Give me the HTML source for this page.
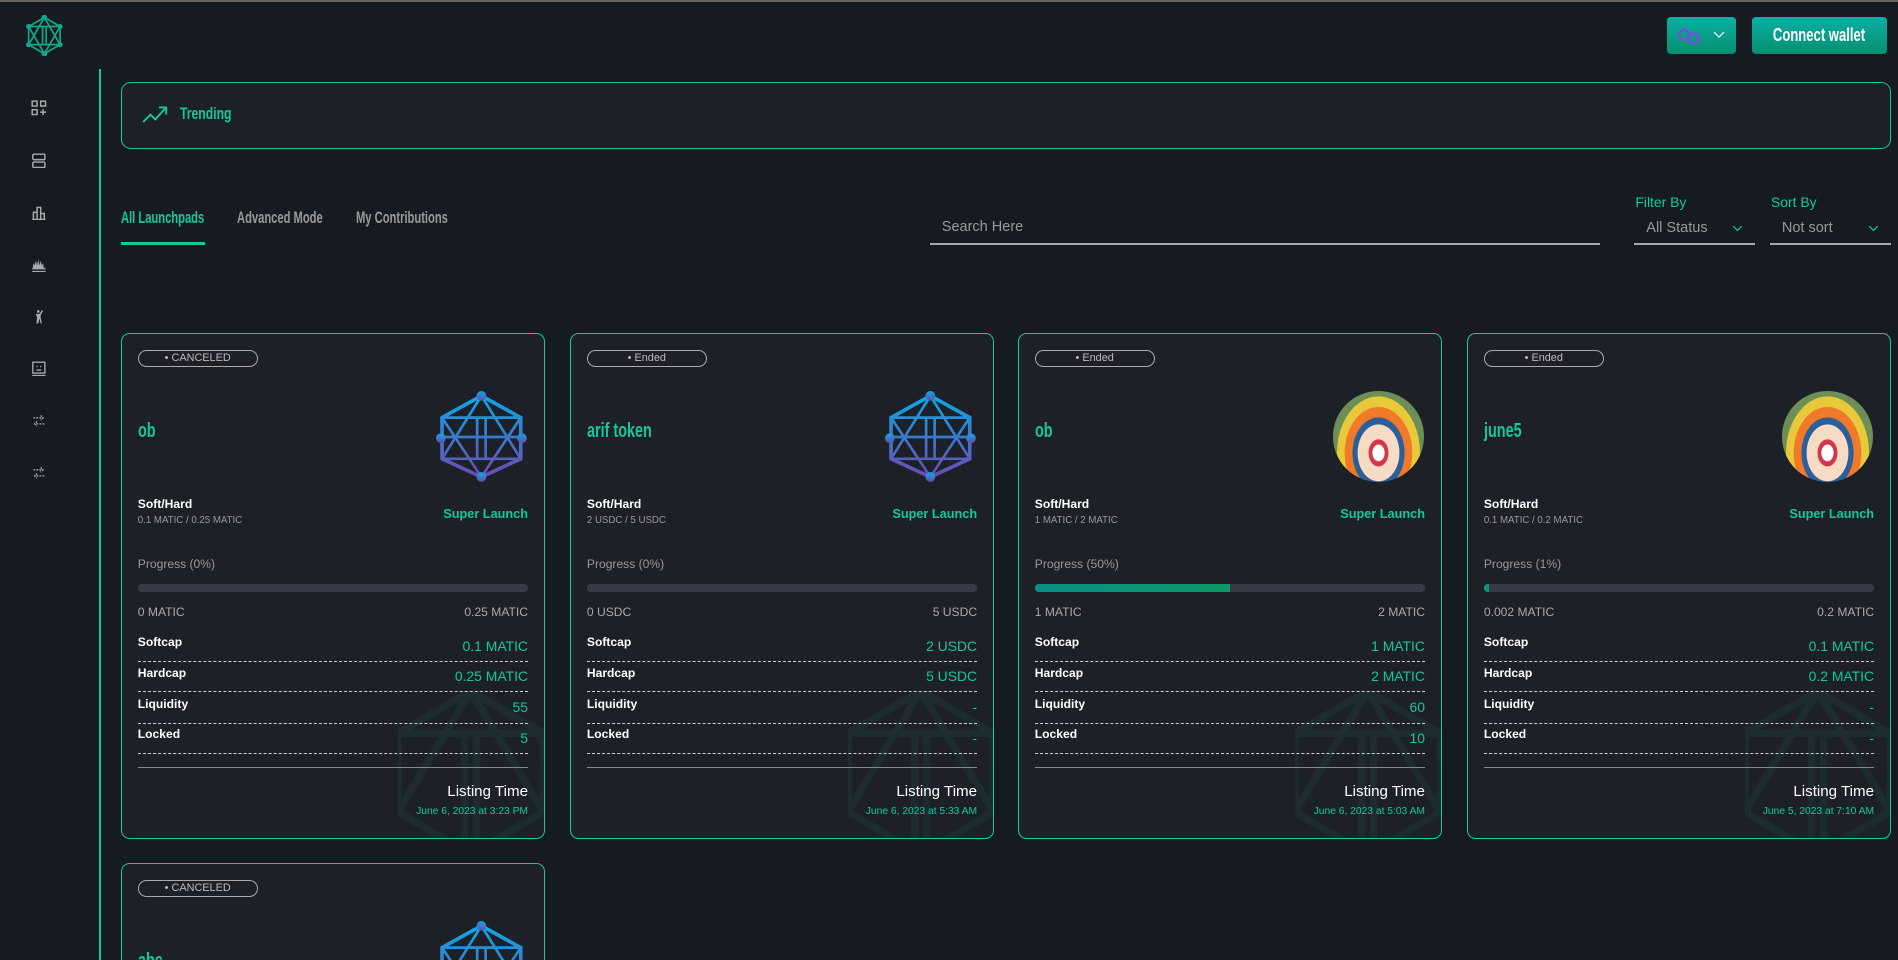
<!DOCTYPE html>
<html><head><meta charset="utf-8"><style>
*{box-sizing:border-box;margin:0;padding:0}
html,body{width:1898px;height:960px;overflow:hidden;background:#161b22}
#w{position:relative;width:1568px;height:793px;overflow:hidden;zoom:1.2105;font-family:"Liberation Sans",sans-serif;color:#fff;background:#161b22}
.a{position:absolute}
.g{color:#13c89c}
.card{position:absolute;width:350px;height:418px;background:#1e2028;border:1px solid #18c99b;border-radius:7px;overflow:hidden}
.badge{position:absolute;left:13px;top:13px;width:99px;height:14px;border:1px solid #aaa;border-radius:8px;font-size:9px;color:#bbb;text-align:center;line-height:12px}
.title{position:absolute;left:13px;top:70px;font-size:17px;font-weight:bold;color:#13c89c;transform:scaleX(.7);transform-origin:left;white-space:nowrap}
.logo{position:absolute;right:14px;top:47px;width:75px;height:75px}
.sh{position:absolute;left:13px;top:135px;font-size:10px;font-weight:bold}
.shv{position:absolute;left:13px;top:150px;font-size:8px;color:#999}
.sl{position:absolute;right:13px;top:142px;font-size:10.5px;font-weight:bold;color:#13c89c}
.pr{position:absolute;left:13px;top:184px;font-size:10px;color:#999}
.bar{position:absolute;left:13px;right:13px;top:207px;height:6px;border-radius:3px;background:#363b46;overflow:hidden}
.bar i{display:block;height:100%;background:linear-gradient(90deg,#0a8f86,#0e9966)}
.mm{position:absolute;left:13px;right:13px;top:224px;font-size:10px;color:#aaa;display:flex;justify-content:space-between}
.row{position:absolute;left:13px;right:13px;height:26px;border-bottom:1px dashed #cfcfcf;font-size:10px}
.row b{position:absolute;left:0;top:4px;font-weight:bold}
.row span{position:absolute;right:0;top:6px;color:#13c89c;font-size:11.5px}
.hr{position:absolute;left:13px;right:13px;top:358px;border-top:1px solid #888}
.lt{position:absolute;right:13px;top:371px;font-size:12.5px}
.dt{position:absolute;right:13px;top:390px;font-size:8.5px;color:#13c89c}
.wm{position:absolute;right:-20px;top:295px;opacity:.07}
.ic{position:absolute;left:26px;width:13px;height:13px}
.av{border-radius:50%;background:radial-gradient(ellipse at 50% 68%,#fff 0 9%,#d2384a 10% 15%,#f6dcc4 16% 32%,#2a5f9c 33% 40%,#f07a2a 41% 52%,#e9c93a 53% 64%,#6d8f55 65%)}
</style></head><body><div id="w">
<div class="a" style="left:0;top:0;width:1568px;height:2px;background:#666"></div>
<svg class="a" style="left:21px;top:12px" width="32" height="34" viewBox="0 0 32 34" fill="none" stroke="#11a889" stroke-width="1.4"><polygon points="16,2 29,9.5 29,24.5 16,32 3,24.5 3,9.5"/><path d="M3,9.5H29M3,24.5H29M16,2L3,24.5M16,2L29,24.5M16,32L3,9.5M16,32L29,9.5M14.5,9.5V24.5M17.5,9.5V24.5"/><g fill="#11a889"><circle cx="16" cy="2" r="1.6"/><circle cx="16" cy="32" r="1.6"/><circle cx="3" cy="9.5" r="1.4"/><circle cx="29" cy="9.5" r="1.4"/><circle cx="3" cy="24.5" r="1.4"/><circle cx="29" cy="24.5" r="1.4"/></g></svg>
<div class="a" style="left:82px;top:57px;width:1.5px;height:736px;background:#14c89a"></div>
<svg class="ic" style="top:83px" viewBox="0 0 13 13" fill="none" stroke="#aaa" stroke-width="1.2"><rect x="1" y="1" width="4" height="4"/><rect x="8" y="1" width="4" height="4"/><rect x="1" y="8" width="4" height="4"/><path d="M10 7.5v5M7.5 10h5"/></svg>
<svg class="ic" style="top:126px" viewBox="0 0 13 13" fill="none" stroke="#aaa" stroke-width="1.2"><rect x="1.5" y="1" width="10" height="4.5" rx="1"/><rect x="1.5" y="7.5" width="10" height="4.5" rx="1"/></svg>
<svg class="ic" style="top:169px" viewBox="0 0 13 13" fill="none" stroke="#aaa" stroke-width="1.2"><path d="M1 12h11M2 12V6h3v6M5 12V2h3v10M8 12V7h3v5"/></svg>
<svg class="ic" style="top:212px" viewBox="0 0 13 13" fill="#aaa"><path d="M1 9h11v1.2H1zM1 11.5h11v1H1zM1.5 9l.5-4 1 2 1-4 1 4 1-5 1 5 1-4 1 4 1-2 .5 4z"/></svg>
<svg class="ic" style="top:255px" viewBox="0 0 13 13" fill="#aaa"><path d="M5 1h2v2H5zM4 4h3l2-3 1 .5-2 3.5v2l1 5H8l-1-4-1 4H4.5l.5-5z"/></svg>
<svg class="ic" style="top:298px" viewBox="0 0 13 13" fill="none" stroke="#aaa" stroke-width="1.1"><rect x="1.5" y="1" width="10" height="9"/><path d="M1 12h11M4.5 4.5h1M7.5 4.5h1M4.5 7.5h4"/></svg>
<svg class="ic" style="top:341px" viewBox="0 0 13 13" fill="none" stroke="#aaa" stroke-width="1.1"><path d="M2 4h8M8 2l2 2-2 2M11 9H3M5 7L3 9l2 2" stroke-dasharray="1.5 1"/></svg>
<svg class="ic" style="top:384px" viewBox="0 0 13 13" fill="none" stroke="#aaa" stroke-width="1.1"><path d="M2 4h8M8 2l2 2-2 2M11 9H3M5 7L3 9l2 2" stroke-dasharray="1.5 1"/></svg>

<div class="a" style="left:1377px;top:14px;width:57px;height:31px;border-radius:3px;background:linear-gradient(180deg,#0bb0a5,#068f6e)"></div>
<svg class="a" style="left:1385px;top:22px" width="22" height="16" viewBox="0 0 22 16" fill="none" stroke="#8247e5" stroke-width="1.8"><polygon points="6,2 10,4.3 10,8.7 6,11 2,8.7 2,4.3"/><polygon points="14,5 18,7.3 18,11.7 14,14 10,11.7 10,7.3"/></svg>
<svg class="a" style="left:1415px;top:26px" width="10" height="7" viewBox="0 0 10 7" fill="none" stroke="#fff"><path d="M1 1l4 4 4-4"/></svg>
<div class="a" style="left:1447px;top:14px;width:112px;height:31px;border-radius:3px;background:linear-gradient(180deg,#0bb0a5,#068f6e);text-align:center;line-height:31px;font-size:15px;font-weight:bold"><span style="display:inline-block;transform:scaleX(.72)">Connect wallet</span></div>

<div class="a" style="left:100px;top:68px;width:1462px;height:55px;background:#1e2028;border:1px solid #14c89a;border-radius:8px"></div>
<svg class="a" style="left:117px;top:87px" width="22" height="16" viewBox="0 0 22 16" fill="none" stroke="#14c89a" stroke-width="1.6"><path d="M1 14l6-6 4 4 8-9M14 2h6v6"/></svg>
<div class="a g" style="left:149px;top:86px;font-size:14px;font-weight:bold;transform:scaleX(.72);transform-origin:left">Trending</div>

<div class="a g" style="left:100px;top:172px;font-size:14px;font-weight:bold;transform:scaleX(.66);transform-origin:left;white-space:nowrap">All Launchpads</div>
<div class="a" style="left:100px;top:200px;width:69px;height:2px;background:#14c89a"></div>
<div class="a" style="left:196px;top:172px;font-size:14px;font-weight:bold;color:#999;transform:scaleX(.66);transform-origin:left;white-space:nowrap">Advanced Mode</div>
<div class="a" style="left:294px;top:172px;font-size:14px;font-weight:bold;color:#999;transform:scaleX(.66);transform-origin:left;white-space:nowrap">My Contributions</div>
<div class="a" style="left:778px;top:181px;font-size:12px;color:#999">Search Here</div>
<div class="a" style="left:768px;top:201px;width:554px;height:1px;background:#aaa"></div>
<div class="a g" style="left:1351px;top:160px;font-size:11.5px">Filter By</div>
<div class="a" style="left:1360px;top:182px;font-size:12px;color:#999">All Status</div>
<svg class="a" style="left:1431px;top:186px" width="9" height="6" viewBox="0 0 9 6" fill="none" stroke="#14c89a"><path d="M1 1l3.5 3.5L8 1"/></svg>
<div class="a" style="left:1350px;top:201px;width:100px;height:1px;background:#aaa"></div>
<div class="a g" style="left:1463px;top:160px;font-size:11.5px">Sort By</div>
<div class="a" style="left:1472px;top:182px;font-size:12px;color:#999">Not sort</div>
<svg class="a" style="left:1543px;top:186px" width="9" height="6" viewBox="0 0 9 6" fill="none" stroke="#14c89a"><path d="M1 1l3.5 3.5L8 1"/></svg>
<div class="a" style="left:1462px;top:201px;width:100px;height:1px;background:#aaa"></div>

<svg width="0" height="0" style="position:absolute"><defs>
<linearGradient id="lg" x1="0" y1="0" x2="0" y2="1"><stop offset="0" stop-color="#0aaae8"/><stop offset="1" stop-color="#6a4bb0"/></linearGradient>
<g id="hx" fill="none" stroke="url(#lg)" stroke-width="3"><polygon points="37.5,4 70,22 70,56 37.5,71 5,56 5,22"/><path d="M5,22H70M5,56H70M37.5,4L5,56M37.5,4L70,56M37.5,71L5,22M37.5,71L70,22M34,22V56M41,22V56M5,38H70" stroke-width="2.2"/><g fill="url(#lg)" stroke="none"><circle cx="37.5" cy="4" r="4"/><circle cx="37.5" cy="71" r="4"/><circle cx="4" cy="39" r="4"/><circle cx="71" cy="39" r="4"/></g></g>
<g id="wm" fill="none" stroke="#14c89a" stroke-width="6"><polygon points="60,0 120,35 120,100 60,135 0,100 0,35"/><path d="M0,35H120M60,0L0,100M60,0L120,100M55,35V135M65,35V135"/></g>
</defs></svg>

<div class="card" style="left:100px;top:275px">
<svg class="wm" width="140" height="140"><use href="#wm"/></svg>
<div class="badge">• CANCELED</div><div class="title">ob</div>
<svg class="logo" viewBox="0 0 75 75"><use href="#hx"/></svg>
<div class="sh">Soft/Hard</div><div class="shv">0.1 MATIC / 0.25 MATIC</div><div class="sl">Super Launch</div>
<div class="pr">Progress (0%)</div><div class="bar"><i style="width:0"></i></div>
<div class="mm"><span>0 MATIC</span><span>0.25 MATIC</span></div>
<div class="row" style="top:245px"><b>Softcap</b><span>0.1 MATIC</span></div>
<div class="row" style="top:270px"><b>Hardcap</b><span>0.25 MATIC</span></div>
<div class="row" style="top:296px"><b>Liquidity</b><span>55</span></div>
<div class="row" style="top:321px"><b>Locked</b><span>5</span></div>
<div class="hr"></div><div class="lt">Listing Time</div><div class="dt">June 6, 2023 at 3:23 PM</div>
</div>

<div class="card" style="left:471px;top:275px">
<svg class="wm" width="140" height="140"><use href="#wm"/></svg>
<div class="badge">• Ended</div><div class="title">arif token</div>
<svg class="logo" viewBox="0 0 75 75"><use href="#hx"/></svg>
<div class="sh">Soft/Hard</div><div class="shv">2 USDC / 5 USDC</div><div class="sl">Super Launch</div>
<div class="pr">Progress (0%)</div><div class="bar"><i style="width:0"></i></div>
<div class="mm"><span>0 USDC</span><span>5 USDC</span></div>
<div class="row" style="top:245px"><b>Softcap</b><span>2 USDC</span></div>
<div class="row" style="top:270px"><b>Hardcap</b><span>5 USDC</span></div>
<div class="row" style="top:296px"><b>Liquidity</b><span>-</span></div>
<div class="row" style="top:321px"><b>Locked</b><span>-</span></div>
<div class="hr"></div><div class="lt">Listing Time</div><div class="dt">June 6, 2023 at 5:33 AM</div>
</div>

<div class="card" style="left:841px;top:275px">
<svg class="wm" width="140" height="140"><use href="#wm"/></svg>
<div class="badge">• Ended</div><div class="title">ob</div>
<div class="logo av"></div>
<div class="sh">Soft/Hard</div><div class="shv">1 MATIC / 2 MATIC</div><div class="sl">Super Launch</div>
<div class="pr">Progress (50%)</div><div class="bar"><i style="width:50%"></i></div>
<div class="mm"><span>1 MATIC</span><span>2 MATIC</span></div>
<div class="row" style="top:245px"><b>Softcap</b><span>1 MATIC</span></div>
<div class="row" style="top:270px"><b>Hardcap</b><span>2 MATIC</span></div>
<div class="row" style="top:296px"><b>Liquidity</b><span>60</span></div>
<div class="row" style="top:321px"><b>Locked</b><span>10</span></div>
<div class="hr"></div><div class="lt">Listing Time</div><div class="dt">June 6, 2023 at 5:03 AM</div>
</div>

<div class="card" style="left:1212px;top:275px">
<svg class="wm" width="140" height="140"><use href="#wm"/></svg>
<div class="badge">• Ended</div><div class="title">june5</div>
<div class="logo av"></div>
<div class="sh">Soft/Hard</div><div class="shv">0.1 MATIC / 0.2 MATIC</div><div class="sl">Super Launch</div>
<div class="pr">Progress (1%)</div><div class="bar"><i style="width:1.2%"></i></div>
<div class="mm"><span>0.002 MATIC</span><span>0.2 MATIC</span></div>
<div class="row" style="top:245px"><b>Softcap</b><span>0.1 MATIC</span></div>
<div class="row" style="top:270px"><b>Hardcap</b><span>0.2 MATIC</span></div>
<div class="row" style="top:296px"><b>Liquidity</b><span>-</span></div>
<div class="row" style="top:321px"><b>Locked</b><span>-</span></div>
<div class="hr"></div><div class="lt">Listing Time</div><div class="dt">June 5, 2023 at 7:10 AM</div>
</div>

<div class="card" style="left:100px;top:713px">
<div class="badge">• CANCELED</div><div class="title">abc</div>
<svg class="logo" viewBox="0 0 75 75"><use href="#hx"/></svg>
</div>
</div></body></html>
